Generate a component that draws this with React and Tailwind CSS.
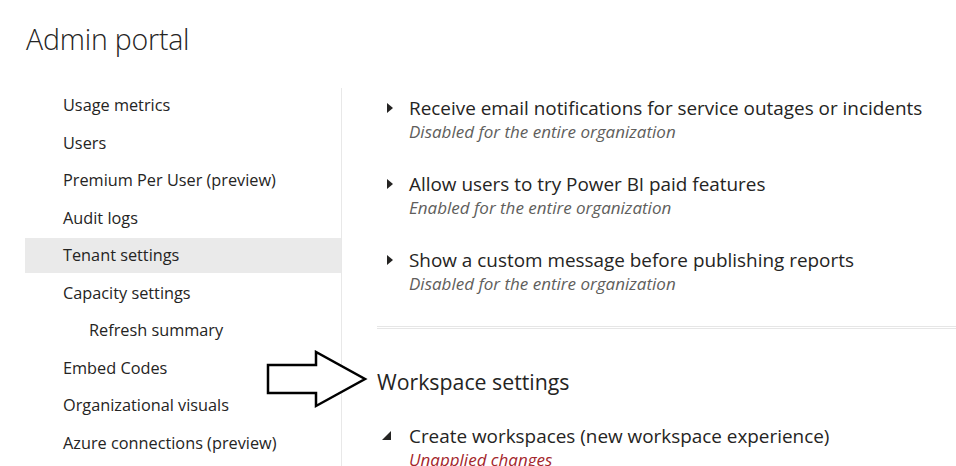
const navItems = [
  { label: 'Usage metrics' },
  { label: 'Users' },
  { label: 'Premium Per User (preview)' },
  { label: 'Audit logs' },
  { label: 'Tenant settings', active: true },
  { label: 'Capacity settings' },
  { label: 'Refresh summary', sub: true },
  { label: 'Embed Codes' },
  { label: 'Organizational visuals' },
  { label: 'Azure connections (preview)' },
];

const settings = [
  { title: 'Receive email notifications for service outages or incidents', status: 'Disabled for the entire organization' },
  { title: 'Allow users to try Power BI paid features', status: 'Enabled for the entire organization' },
  { title: 'Show a custom message before publishing reports', status: 'Disabled for the entire organization' },
];

function Caret({ open }) {
  if (open) {
    return (
      <svg width="9" height="9" viewBox="0 0 9 9" className="shrink-0">
        <path d="M9 0 L9 9 L0 9 Z" fill="#252423" />
      </svg>
    );
  }
  return (
    <svg width="6" height="10" viewBox="0 0 6 10" className="shrink-0">
      <path d="M0 0 L6 5 L0 10 Z" fill="#252423" />
    </svg>
  );
}

export default function App() {
  return (
    <div className="relative w-[956px] h-[466px] overflow-hidden bg-white text-[#252423] font-['Open_Sans',sans-serif]">
      <h1 className="pl-[26px] pt-[19px] h-[88px] text-[28.5px] leading-[40px] font-light tracking-[-0.2px]">Admin portal</h1>

      <div className="flex">
        {/* sidebar */}
        <nav className="w-[342px] shrink-0 pl-[25px] border-r border-[#e8e8e8] h-[378px]">
          <ul className="flex flex-col gap-[2.5px]">
            {navItems.map((item) => (
              <li
                key={item.label}
                className={`h-[35px] flex items-center text-[16.3px] ${item.sub ? 'pl-[64px]' : 'pl-[38px]'} ${item.active ? 'bg-[#eaeaea]' : ''}`}
              >
                {item.label}
              </li>
            ))}
          </ul>
        </nav>

        {/* content */}
        <main className="flex-1 pl-[35px]">
          <div className="flex flex-col gap-[28px] pt-[8px]">
            {settings.map((s) => (
              <div key={s.title} className="flex items-start">
                <div className="w-[32px] pt-[7px] pl-[10px]">
                  <Caret />
                </div>
                <div>
                  <div className="text-[18.9px] leading-[24px]">{s.title}</div>
                  <div className="text-[17px] leading-[24px] italic text-[#605e5c]">{s.status}</div>
                </div>
              </div>
            ))}
          </div>

          <div className="mt-[30px] border-t border-b border-[#e6e6e6] h-[3px]" />

          <h2 className="mt-[38px] text-[21.3px] leading-[30px]">Workspace settings</h2>

          <div className="flex items-start mt-[27px]">
            <div className="w-[32px] pt-[7px] pl-[5px]">
              <Caret open />
            </div>
            <div>
              <div className="text-[18.9px] leading-[24px]">Create workspaces (new workspace experience)</div>
              <div className="text-[17px] leading-[24px] italic text-[#a4262c]">Unapplied changes</div>
            </div>
          </div>
        </main>
      </div>

      {/* annotation arrow */}
      <svg className="absolute left-[266px] top-[350px]" width="102" height="60" viewBox="0 0 102 60">
        <path
          d="M2 15 L50 15 L50 2 L99 29 L50 56 L50 43 L2 43 Z"
          fill="white"
          stroke="black"
          strokeWidth="2.5"
          strokeLinejoin="miter"
        />
      </svg>
    </div>
  );
}
